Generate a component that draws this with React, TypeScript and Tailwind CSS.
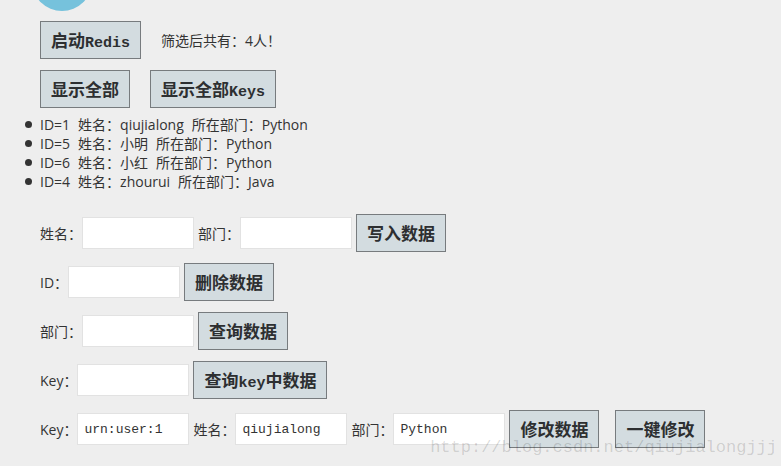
import React from "react";

const people = [
  { id: 1, name: "qiujialong", dept: "Python" },
  { id: 5, name: "小明", dept: "Python" },
  { id: 6, name: "小红", dept: "Python" },
  { id: 4, name: "zhourui", dept: "Java" },
];

const ActionButton = ({ children }: { children: React.ReactNode }) => (
  <button
    type="button"
    className="h-[38px] shrink-0 whitespace-nowrap border border-[#777b7e] bg-[#d3dce0] px-[10px] font-['Noto_Sans_CJK_SC',sans-serif] text-[17px] leading-5 font-bold text-[#2d2f31] hover:bg-[#c6d1d6]"
  >
    {children}
  </button>
);

// latin words inside button captions
const Latin = ({ children }: { children: React.ReactNode }) => (
  <span className="font-['Liberation_Mono',monospace] text-[15px] leading-none">
    {children}
  </span>
);

const Field = ({
  id,
  label,
  value,
}: {
  id: string;
  label: string;
  value?: string;
}) => (
  <div className="flex shrink-0 items-center">
    <label htmlFor={id} className="whitespace-nowrap">
      {label}：
    </label>
    <input
      id={id}
      type="text"
      defaultValue={value}
      className="h-8 w-28 border border-[#e2e2e2] bg-white px-[6px] font-['Liberation_Mono','Noto_Sans_CJK_SC',monospace] text-[13px] text-[#333] outline-none focus:border-[#76c2dc]"
    />
  </div>
);

const App = () => {
  return (
    <main className="relative min-h-screen overflow-hidden bg-[#eeeeee] px-10 font-['Open_Sans','Noto_Sans_CJK_SC',sans-serif] text-sm leading-[19px] text-[#333]">
      {/* Avatar, scrolled mostly out of view */}
      <header className="-ml-2 flex h-[11px] items-end overflow-hidden">
        <div className="size-[60px] shrink-0 rounded-full bg-[#76c2dc]" />
      </header>

      <section className="mt-[10px] flex flex-col gap-[11px]">
        <div className="flex items-center gap-5">
          <ActionButton>
            启动<Latin>Redis</Latin>
          </ActionButton>
          <p>筛选后共有：4人！</p>
        </div>
        <div className="flex items-center gap-5">
          <ActionButton>显示全部</ActionButton>
          <ActionButton>
            显示全部<Latin>Keys</Latin>
          </ActionButton>
        </div>
      </section>

      <ul className="mt-[7px] list-none">
        {people.map((p) => (
          <li key={p.id} className="-ml-[15px] flex items-center gap-2">
            <span className="size-[7px] shrink-0 rounded-full bg-[#333]" />
            <span>ID={p.id}</span>
            <span>姓名：{p.name}</span>
            <span>所在部门：{p.dept}</span>
          </li>
        ))}
      </ul>

      <section className="mt-[23px] flex flex-col gap-[11px]">
        <form className="flex items-center gap-1">
          <Field id="add-name" label="姓名" />
          <Field id="add-dept" label="部门" />
          <ActionButton>写入数据</ActionButton>
        </form>
        <form className="flex items-center gap-1">
          <Field id="delete-id" label="ID" />
          <ActionButton>删除数据</ActionButton>
        </form>
        <form className="flex items-center gap-1">
          <Field id="query-dept" label="部门" />
          <ActionButton>查询数据</ActionButton>
        </form>
        <form className="flex items-center gap-1">
          <Field id="query-key" label="Key" />
          <ActionButton>
            查询<Latin>key</Latin>中数据
          </ActionButton>
        </form>
        <form className="flex items-center gap-4">
          <div className="flex items-center gap-1">
            <Field id="edit-key" label="Key" value="urn:user:1" />
            <Field id="edit-name" label="姓名" value="qiujialong" />
            <Field id="edit-dept" label="部门" value="Python" />
            <ActionButton>修改数据</ActionButton>
          </div>
          <ActionButton>一键修改</ActionButton>
        </form>
      </section>

      {/* Watermark */}
      <p className="pointer-events-none absolute right-1 bottom-2 font-['Liberation_Mono',monospace] text-[17px] leading-5 text-black/15">
        http://blog.csdn.net/qiujialongjjj
      </p>
    </main>
  );
};

export default App;
